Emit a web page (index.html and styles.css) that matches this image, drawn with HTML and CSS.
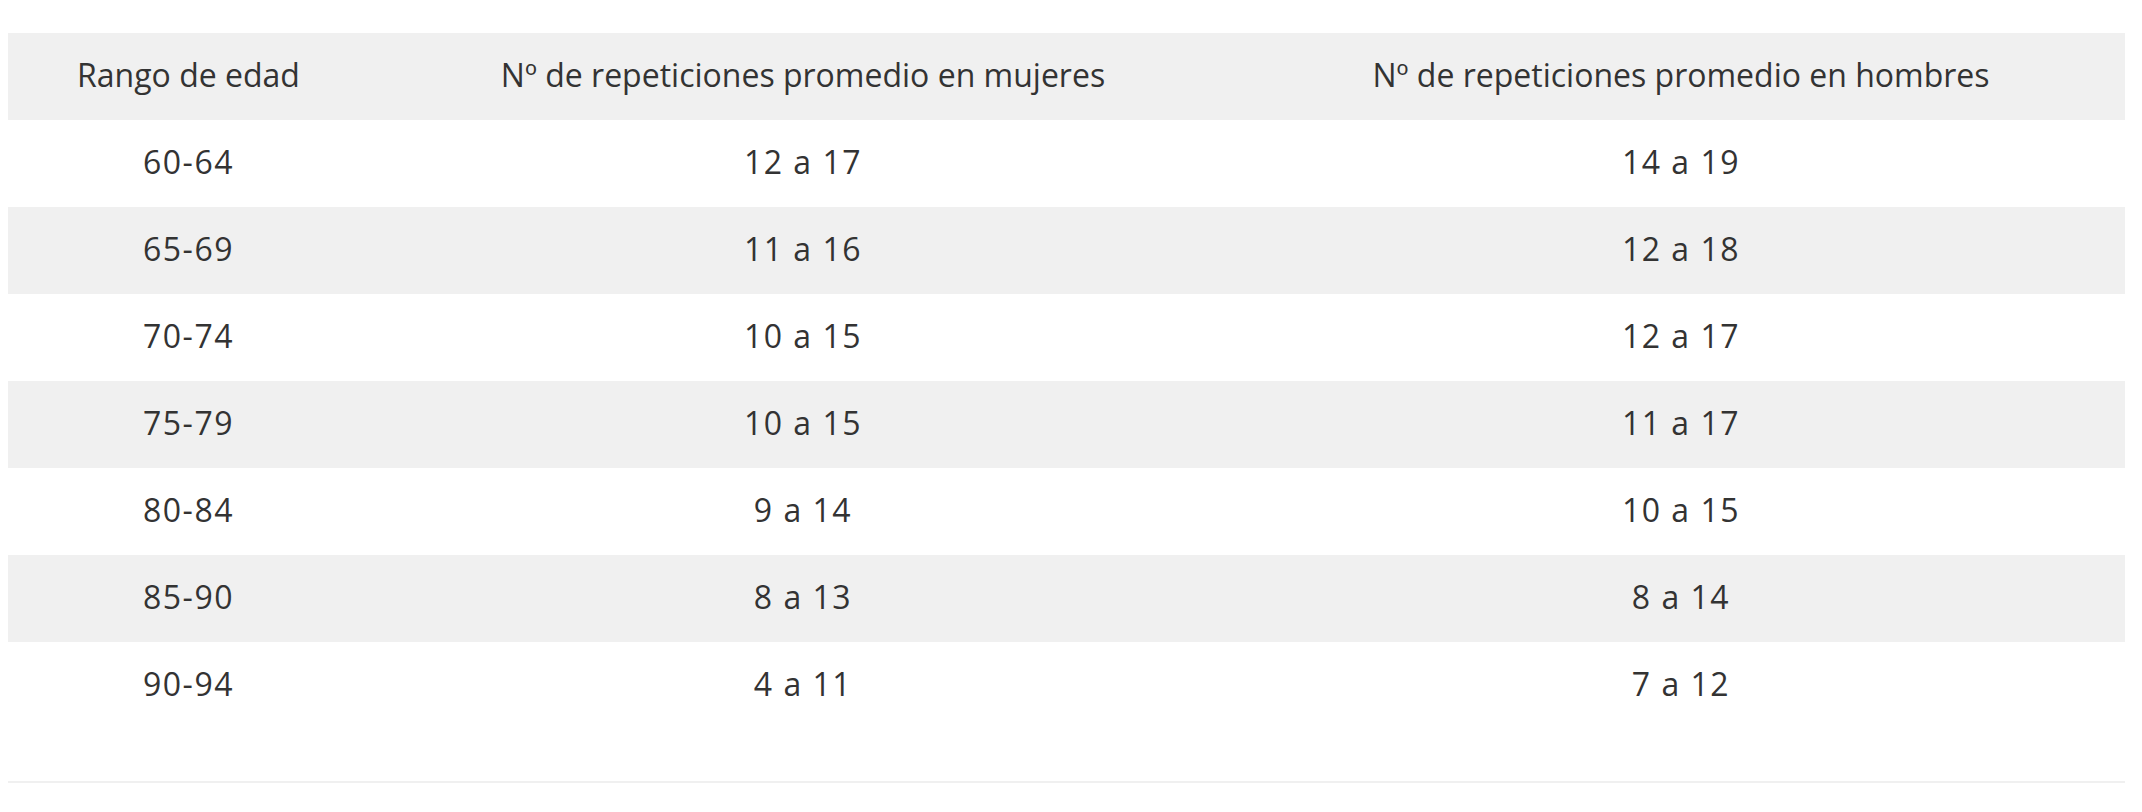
FILE: index.html
```html
<!DOCTYPE html>
<html lang="es">
<head>
<meta charset="utf-8">
<title>Tabla</title>
<link rel="stylesheet" href="styles.css">
</head>
<body>
<div class="wrap">
  <table class="tbl">
    <colgroup>
      <col class="c1"><col class="c2"><col class="c3">
    </colgroup>
    <thead>
      <tr class="odd"><th>Rango de edad</th><th>Nº de repeticiones promedio en mujeres</th><th>Nº de repeticiones promedio en hombres</th></tr>
    </thead>
    <tbody>
      <tr><td>60-64</td><td>12 a 17</td><td>14 a 19</td></tr>
      <tr class="odd"><td>65-69</td><td>11 a 16</td><td>12 a 18</td></tr>
      <tr><td>70-74</td><td>10 a 15</td><td>12 a 17</td></tr>
      <tr class="odd"><td>75-79</td><td>10 a 15</td><td>11 a 17</td></tr>
      <tr><td>80-84</td><td>9 a 14</td><td>10 a 15</td></tr>
      <tr class="odd"><td>85-90</td><td>8 a 13</td><td>8 a 14</td></tr>
      <tr><td>90-94</td><td>4 a 11</td><td>7 a 12</td></tr>
    </tbody>
  </table>
  <div class="rule"></div>
</div>
</body>
</html>
```

FILE: styles.css
```css
html, body { margin: 0; padding: 0; background: #fff; }
body { padding: 33px 17px 0 8px; }
.wrap { width: 2117px; }
.tbl {
  width: 2117px;
  border-collapse: collapse;
  table-layout: fixed;
  font-family: "Open Sans", "Noto Sans", sans-serif;
  font-size: 32px;
  color: #333;
}
.c1 { width: 361px; }
.c2 { width: 868px; }
.c3 { width: 888px; }
.tbl tr { height: 87px; }
.tbl th, .tbl td {
  padding: 0 0 3px;
  text-align: center;
  vertical-align: middle;
  font-weight: 400;
  white-space: nowrap;
  line-height: 40px;
}
.tbl th { letter-spacing: 0; }
.tbl td { letter-spacing: 1.5px; }
.tbl tr.odd { background: #f0f0f0; }
.rule {
  margin-top: 52px;
  height: 2px;
  background: #f0f0f0;
}
```
